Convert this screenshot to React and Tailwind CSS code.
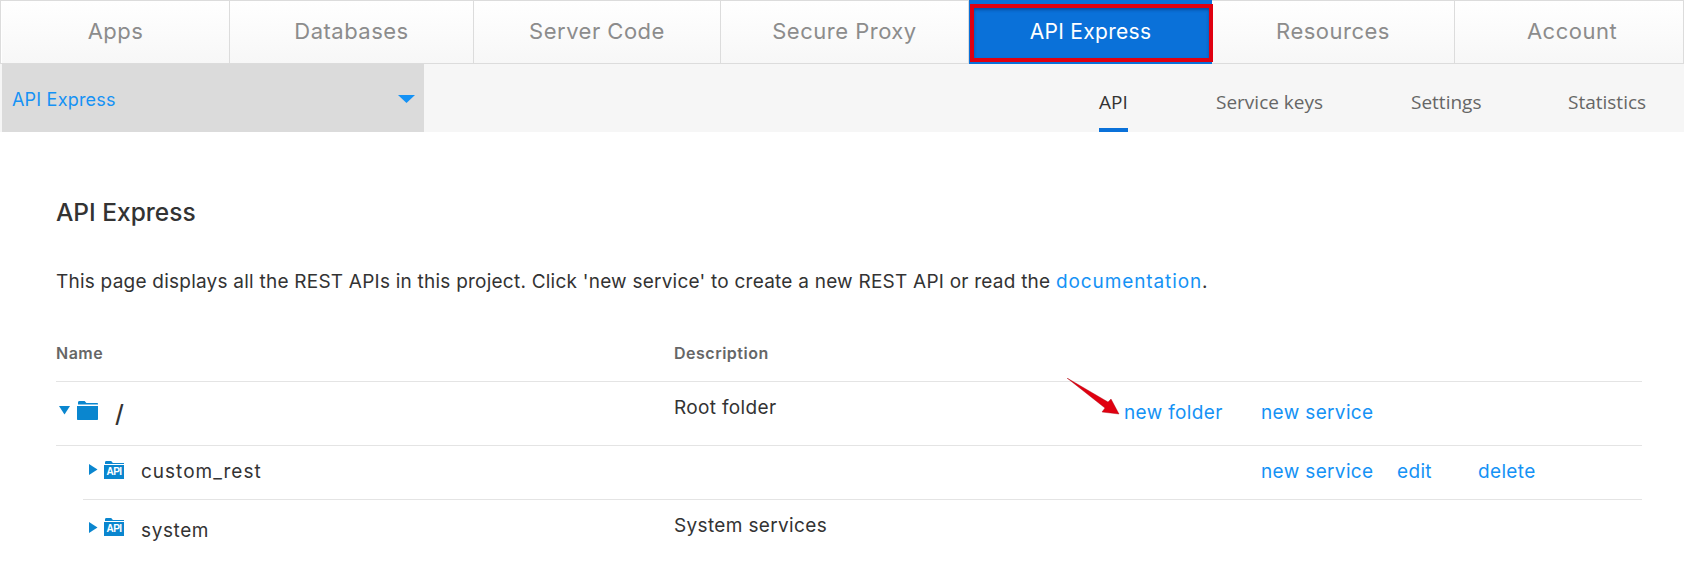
import React from 'react'

const FONT = { fontFamily: 'Inter, "Open Sans", sans-serif' }
const OPEN = { fontFamily: '"Open Sans", sans-serif' }

const TABS = [
  ['Apps', 'w-[228px]'],
  ['Databases', 'w-[244px]'],
  ['Server Code', 'w-[247px]'],
  ['Secure Proxy', 'w-[248px]'],
]
const TABS_RIGHT = [
  ['Resources', 'w-[243px]'],
  ['Account', 'flex-1 pl-[6px]'],
]

function Tab({ label, width }) {
  return (
    <div className={`flex h-full items-center justify-center border-r border-[#dcdcdc] bg-gradient-to-b from-white to-[#f7f7f7] pb-px text-[22px] tracking-[0.5px] text-[#8c8c8c] ${width}`}>
      {label}
    </div>
  )
}

function TopNav() {
  return (
    <div className="flex h-[64px] border border-[#dcdcdc] border-r-0 pl-px">
      {TABS.map(([l, w]) => <Tab key={l} label={l} width={w} />)}
      <div className="relative -mt-px flex h-[64px] w-[243px] items-center justify-center bg-[#0a71d9] pb-px text-[21px] tracking-[0.3px] text-white">
        API Express
        <div className="absolute bottom-[2px] left-px right-[-1px] top-[4px] border-[4px] border-[#e00010] shadow-[inset_0_2px_3px_rgba(0,40,110,0.5)]" />
      </div>
      {TABS_RIGHT.map(([l, w]) => <Tab key={l} label={l} width={w} />)}
    </div>
  )
}

function SubNav() {
  return (
    <div className="flex h-[68px] bg-[#f6f6f6] pl-[2px]">
      <div className="flex w-[422px] items-center justify-between bg-[#dbdbdb] pl-[10px] pr-[9px] pt-[2px] text-[18px] tracking-[0.2px] text-[#1592f5]">
        <span>API Express</span>
        <svg width="17" height="8" viewBox="0 0 17 8"><path d="M0 0h17L8.500 8z" fill="#1592f5" /></svg>
      </div>
      <div className="ml-[675px] flex text-[19px] leading-[24px] text-[#666]" style={OPEN}>
        <div className="flex w-[29px] justify-center border-b-[4px] border-[#0a71d9] pt-[26px] text-[#333]"><span>API</span></div>
        <div className="ml-[88px] w-[107px] whitespace-nowrap pt-[26px]">Service keys</div>
        <div className="ml-[88px] w-[70px] whitespace-nowrap pt-[26px]">Settings</div>
        <div className="ml-[87px] w-[79px] whitespace-nowrap pt-[26px]">Statistics</div>
      </div>
    </div>
  )
}

function Caret({ open }) {
  if (open) return <svg width="11" height="9" viewBox="0 0 11 9"><path d="M0 0h11L5.500 8.500z" fill="#0a86cf" /></svg>
  return <svg width="9" height="11" viewBox="0 0 9 11"><path d="M0 0l8.500 5.500L0 11z" fill="#0a86cf" /></svg>
}

function FolderIcon() {
  return (
    <svg width="21" height="19" viewBox="0 0 21 19">
      <path d="M1 1.500C1 .7 1.600 0 2.400 0h5.200L9.400 2H20c.6 0 1 .4 1 1v.6H1z" fill="#0a86cf" />
      <path d="M0 5h21v13c0 .6-.4 1-1 1H1c-.6 0-1-.4-1-1z" fill="#0a86cf" />
    </svg>
  )
}

function ApiFolder() {
  return (
    <div className="relative h-[18px] w-[20px]">
      <svg className="absolute inset-0" width="20" height="18" viewBox="0 0 20 18">
        <path d="M1 1.500C1 .7 1.500 0 2.300 0h4.900L8.900 2H20v1H1z" fill="#0a86cf" />
        <path d="M0 4h20v14H0z" fill="#0a86cf" />
      </svg>
      <span className="absolute inset-x-0 top-[5px] text-center text-[10px] font-bold leading-[12px] tracking-[-0.5px] text-white" style={{ fontFamily: '"Liberation Sans", sans-serif' }}>API</span>
    </div>
  )
}

function Lnk({ className = '', children }) {
  return <span className={`whitespace-nowrap text-[#1592f5] ${className}`}>{children}</span>
}

function RedArrow() {
  return (
    <svg className="absolute left-[1011px] top-[-4px]" width="54" height="38" viewBox="0 0 54 38">
      <path d="M0 0 L41 24 L44 21 L52 36 L35 34 L38 30 Z" fill="#e00010" stroke="#a80010" strokeWidth="0.4" />
    </svg>
  )
}

export default function App() {
  return (
    <div className="h-[568px] w-[1684px] overflow-hidden bg-white text-[#333]" style={FONT}>
      <TopNav />
      <SubNav />

      <div className="pl-[56px] pr-[42px]">
        <h1 className="mt-[62px] text-[24.500px] font-medium leading-[36px] text-[#333]">API Express</h1>
        <p className="mt-[38px] whitespace-nowrap text-[19px] leading-[28px] tracking-[0.23px] text-[#333]">
          This page displays all the REST APIs in this project. Click 'new service' to create a new REST API or read the <Lnk className="tracking-[0.9px]">documentation</Lnk>.
        </p>

        <div className="mt-[40px] flex h-[46px] items-start border-b border-[#e4e4e4] pt-[6px] text-[16px] font-semibold leading-[22px] tracking-[0.5px] text-[#666]">
          <div className="w-[618px]">Name</div>
          <div>Description</div>
        </div>

        <div className="relative flex h-[64px] items-start border-b border-[#e4e4e4] text-[19px] leading-[26px] tracking-[0.35px]">
          <div className="flex h-full w-[618px] items-center">
            <div className="mb-[6px] ml-[3px] mr-[7px] flex"><Caret open /></div>
            <div className="mb-[6px] flex"><FolderIcon /></div>
            <span className="ml-[17px] text-[24px] font-medium">/</span>
          </div>
          <div className="pt-[13px]">Root folder</div>
          <div className="absolute left-[1068px] top-[18px] flex">
            <Lnk className="w-[137px]">new folder</Lnk>
            <Lnk>new service</Lnk>
          </div>
          <RedArrow />
        </div>

        <div className="ml-[27px] text-[19px] leading-[26px] tracking-[0.35px]">
          <div className="relative flex h-[54px] items-center border-b border-[#e4e4e4]">
            <div className="mb-[6px] ml-[6px] mr-[6px] flex"><Caret /></div>
            <div className="mb-[6px]"><ApiFolder /></div>
            <span className="mb-[2px] ml-[17px] tracking-[1px]">custom_rest</span>
            <div className="absolute left-[1178px] top-[13px] flex">
              <Lnk className="w-[136px]">new service</Lnk>
              <Lnk className="w-[81px]">edit</Lnk>
              <Lnk>delete</Lnk>
            </div>
          </div>
          <div className="relative flex h-[60px] items-center">
            <div className="mb-[6px] ml-[6px] mr-[6px] flex"><Caret /></div>
            <div className="mb-[6px]"><ApiFolder /></div>
            <span className="ml-[17px] mt-[2px] tracking-[0.6px]">system</span>
            <span className="absolute left-[591px] top-[13px]">System services</span>
          </div>
        </div>
      </div>
    </div>
  )
}
